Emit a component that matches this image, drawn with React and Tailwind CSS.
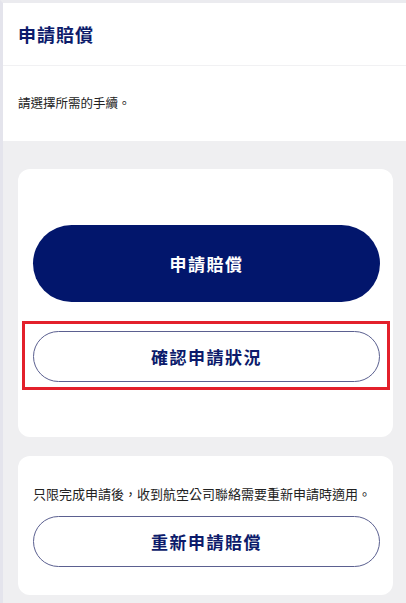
export default function App() {
  const font = { fontFamily: '"Noto Sans CJK TC", "Noto Sans", sans-serif' }

  return (
    <div style={font} className="min-h-screen bg-[#efeff1] border-l-[3px] border-t-[3px] border-l-[#e4e4ec] border-t-[#ebebef]">
      {/* Header */}
      <div className="h-[63px] bg-white flex items-center px-[15px] border-b border-[#f1f1f3]">
        <h1 className="text-[18px] font-bold text-[#0c1b6b] tracking-[1px]">申請賠償</h1>
      </div>
      <div className="h-[75px] bg-white flex items-center px-[15px]">
        <p className="text-[12.5px] text-[#222]">請選擇所需的手續。</p>
      </div>

      <div className="pl-[15px] pr-[13px] pt-[28px] pb-[7px] flex flex-col gap-[19px]">
        {/* Card 1 */}
        <div className="bg-white rounded-[12px] pl-[15px] pr-[13px] pt-[56px] pb-[55px] flex flex-col gap-[29px]">
          <button className="h-[77px] w-full rounded-full bg-[#02166c] text-white text-[17px] font-bold tracking-[1.5px]">
            申請賠償
          </button>
          <div className="relative">
            <button className="h-[51px] w-full rounded-full border border-[#5b6090] bg-white text-[#0c1b6b] text-[17px] font-bold tracking-[1.5px]">
              確認申請狀況
            </button>
            <div className="absolute -left-[11px] -right-[10px] -top-[10px] -bottom-[8px] border-[3px] border-[#e3202b] pointer-events-none" />
          </div>
        </div>

        {/* Card 2 */}
        <div className="bg-white rounded-[12px] pl-[15px] pr-[13px] pt-[28px] pb-[28px] flex flex-col gap-[12px]">
          <p className="text-[13px] text-[#222] leading-[20px] whitespace-nowrap">只限完成申請後，收到航空公司聯絡需要重新申請時適用。</p>
          <button className="h-[51px] w-full rounded-full border border-[#5b6090] bg-white text-[#0c1b6b] text-[17px] font-bold tracking-[1.5px]">
            重新申請賠償
          </button>
        </div>
      </div>
    </div>
  )
}
